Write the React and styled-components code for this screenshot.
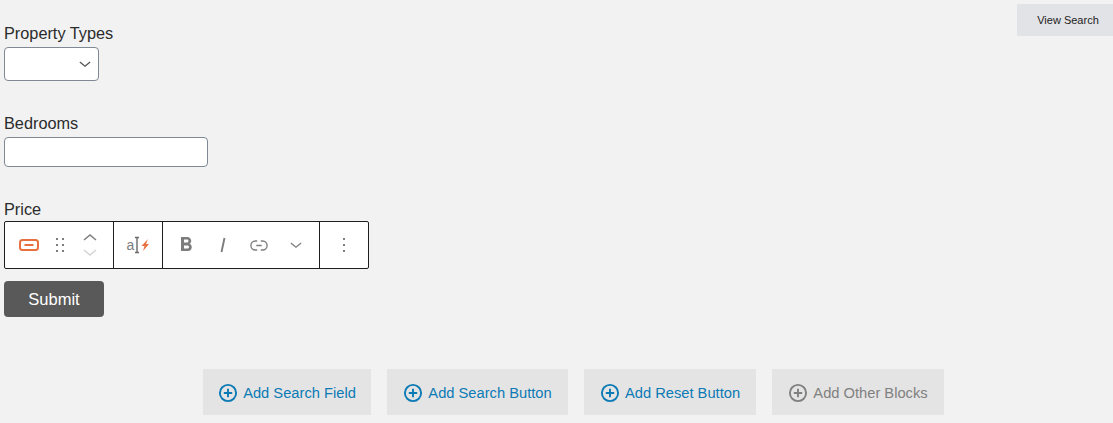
import React from "react";
import styled, { createGlobalStyle } from "styled-components";
import { MdFormatBold } from "react-icons/md";

const GlobalStyle = createGlobalStyle`
    html, body {
        margin: 0;
        padding: 0;
        background: #f2f2f3;
        font-family: "Liberation Sans", Arial, sans-serif;
    }
`

const ICON_GRAY = "#7d7d7d";
const ORANGE = "#e8703f";

const PlusIcon = () => (
    <svg width="20" height="20" viewBox="0 0 20 20" fill="none" stroke="currentColor">
        <circle cx="10" cy="10" r="8.1" strokeWidth="1.9" />
        <path d="M10 5.8v8.4M5.8 10h8.4" strokeWidth="1.9" />
    </svg>
);

const Chevron = ({ up, color = ICON_GRAY, width = 14, height = 8 }) => (
    <svg width={width} height={height} viewBox="0 0 14 8" fill="none" stroke={color} strokeWidth="1.5">
        <path d={up ? "M1 7l6-5 6 5" : "M1 1l6 5 6-5"} />
    </svg>
);

const App = () => {
    return (
        <Page>
            <GlobalStyle />
            <Top>
                <Form>
                    <Field>
                        <Label>Property Types</Label>
                        <SelectBox>
                            <Chevron color="#555" width={12} height={7} />
                        </SelectBox>
                    </Field>
                    <Field>
                        <Label>Bedrooms</Label>
                        <TextBox />
                    </Field>
                    <Label>Price</Label>
                    <Toolbar>
                        <Group $width="109px" $pad="9px">
                            <Slot $width="30.5px">
                                <svg width="20" height="12" viewBox="0 0 20 12" fill="none">
                                    <rect x="1" y="1" width="18" height="10" rx="2.5" stroke={ORANGE} strokeWidth="2" />
                                    <path d="M5.5 6h9" stroke={ORANGE} strokeWidth="2" />
                                </svg>
                            </Slot>
                            <Slot $width="30.5px">
                                <svg width="10" height="14" viewBox="0 0 10 14" fill={ICON_GRAY}>
                                    <rect x="1" y="0" width="2" height="2" />
                                    <rect x="7" y="0" width="2" height="2" />
                                    <rect x="1" y="6" width="2" height="2" />
                                    <rect x="7" y="6" width="2" height="2" />
                                    <rect x="1" y="12" width="2" height="2" />
                                    <rect x="7" y="12" width="2" height="2" />
                                </svg>
                            </Slot>
                            <Slot $width="30.5px">
                                <Movers>
                                    <Chevron up />
                                    <Chevron color="#d4d4d4" />
                                </Movers>
                            </Slot>
                        </Group>
                        <Group $width="49px" $center>
                            <TransformIcon>
                                <span>a</span>
                                <svg width="15" height="18" viewBox="0 0 15 18" fill="none">
                                    <path d="M1 1.5h4M3 1.5v15M1 16.5h4" stroke="#6a6a6a" strokeWidth="1.4" />
                                    <path d="M14 3L7.5 10h3L9 15l6-7h-3z" fill={ORANGE} />
                                </svg>
                            </TransformIcon>
                        </Group>
                        <Group $width="157px" $pad="5px">
                            <Slot $width="36.6px">
                                <MdFormatBold size={24} color={ICON_GRAY} />
                            </Slot>
                            <Slot $width="36.6px">
                                <svg width="10" height="16" viewBox="0 0 10 16" fill="none">
                                    <path d="M6.5 1L3.5 15" stroke={ICON_GRAY} strokeWidth="1.9" />
                                </svg>
                            </Slot>
                            <Slot $width="36.6px">
                                <svg width="18" height="11" viewBox="0 0 20 12" fill="none" stroke={ICON_GRAY} strokeWidth="1.5">
                                    <path d="M8 1H6a5 5 0 0 0 0 10h2M12 1h2a5 5 0 0 1 0 10h-2M7 6h6" />
                                </svg>
                            </Slot>
                            <Slot $width="36.6px">
                                <Chevron width={12} height={7} />
                            </Slot>
                        </Group>
                        <Group $last $center>
                            <svg width="4" height="16" viewBox="0 0 4 16" fill={ICON_GRAY}>
                                <rect x="1" y="1" width="2" height="2" />
                                <rect x="1" y="7" width="2" height="2" />
                                <rect x="1" y="13" width="2" height="2" />
                            </svg>
                        </Group>
                    </Toolbar>
                    <Submit>Submit</Submit>
                </Form>
                <ViewSearch>View Search</ViewSearch>
            </Top>
            <Actions>
                <AddButton $width="168px">
                    <PlusIcon />
                    <span>Add Search Field</span>
                </AddButton>
                <AddButton $width="181px">
                    <PlusIcon />
                    <span>Add Search Button</span>
                </AddButton>
                <AddButton $width="172px">
                    <PlusIcon />
                    <span>Add Reset Button</span>
                </AddButton>
                <AddButton $width="172px" $muted>
                    <PlusIcon />
                    <span>Add Other Blocks</span>
                </AddButton>
            </Actions>
        </Page>
    )
}

const Page = styled.div`
    width: 1113px;
    height: 423px;
    overflow: hidden;
    display: flex;
    flex-direction: column;
`

const Top = styled.div`
    display: flex;
    justify-content: space-between;
    align-items: flex-start;
    padding: 4px 0 0 4px;
`

const Form = styled.div`
    padding-top: 21px;
    display: flex;
    flex-direction: column;
    align-items: flex-start;
`

const Field = styled.div`
    display: flex;
    flex-direction: column;
    align-items: flex-start;
    margin-bottom: 34px;
`

const Label = styled.label`
    font-size: 16.3px;
    line-height: 16px;
    height: 22px;
    color: #2b2b2b;
`

const SelectBox = styled.div`
    box-sizing: border-box;
    width: 95px;
    height: 34px;
    background: #fff;
    border: 1px solid #7e8993;
    border-radius: 4px;
    display: flex;
    align-items: center;
    justify-content: flex-end;
    padding-right: 7px;
`

const TextBox = styled.div`
    box-sizing: border-box;
    width: 204px;
    height: 30px;
    background: #fff;
    border: 1px solid #7e8993;
    border-radius: 4px;
`

const Toolbar = styled.div`
    box-sizing: border-box;
    margin-top: -2px;
    width: 365px;
    height: 48px;
    background: #fff;
    border: 1px solid #1e1e1e;
    border-radius: 2px;
    display: flex;
`

const Group = styled.div`
    box-sizing: border-box;
    flex: ${props => (props.$width ? `0 0 ${props.$width}` : "1")};
    height: 100%;
    display: flex;
    align-items: center;
    justify-content: ${props => (props.$center ? "center" : "flex-start")};
    padding-left: ${props => props.$pad || 0};
    border-right: ${props => (props.$last ? "none" : "1px solid #1e1e1e")};
`

const Slot = styled.div`
    width: ${props => props.$width};
    display: flex;
    align-items: center;
    justify-content: center;
`

const Movers = styled.div`
    display: flex;
    flex-direction: column;
    gap: 8px;
`

const TransformIcon = styled.div`
    display: flex;
    align-items: center;
    color: ${ICON_GRAY};
    font-size: 14px;
`

const Submit = styled.button`
    width: 100px;
    height: 36px;
    margin-top: 12px;
    border: none;
    border-radius: 4px;
    background: #595959;
    color: #fff;
    font-family: inherit;
    font-size: 16.5px;
`

const ViewSearch = styled.div`
    width: 96px;
    height: 32px;
    background: #e2e3e6;
    color: #222;
    font-size: 11px;
    display: flex;
    align-items: center;
    justify-content: center;
    padding-left: 6px;
    box-sizing: border-box;
`

const Actions = styled.div`
    display: flex;
    justify-content: center;
    gap: 16px;
    margin-top: 52px;
    padding-left: 34px;
`

const AddButton = styled.div`
    box-sizing: border-box;
    width: ${props => props.$width};
    height: 46px;
    padding-top: 2px;
    background: #e5e4e4;
    color: ${props => (props.$muted ? "#808080" : "#0b7ab5")};
    font-size: 14.7px;
    display: flex;
    align-items: center;
    justify-content: center;
    gap: 5px;
`

export default App;
